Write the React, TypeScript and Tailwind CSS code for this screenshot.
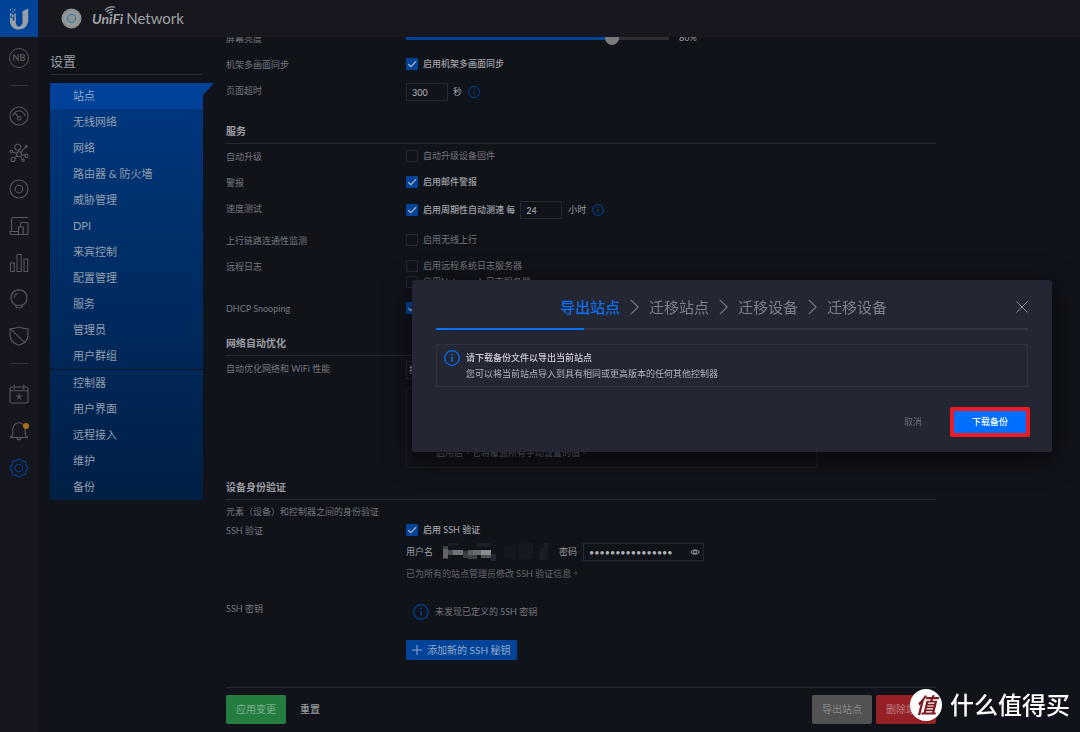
import type { ReactNode } from "react";
import { useId } from "react";
import clsx from "clsx";

interface MenuItem {
  label: string;
  active?: boolean;
}

const SITE_MENU: MenuItem[] = [
  { label: "站点", active: true },
  { label: "无线网络" },
  { label: "网络" },
  { label: "路由器 & 防火墙" },
  { label: "威胁管理" },
  { label: "DPI" },
  { label: "来宾控制" },
  { label: "配置管理" },
  { label: "服务" },
  { label: "管理员" },
  { label: "用户群组" },
];

const CONTROLLER_MENU: MenuItem[] = [
  { label: "控制器" },
  { label: "用户界面" },
  { label: "远程接入" },
  { label: "维护" },
  { label: "备份" },
];

const STEPS = ["导出站点", "迁移站点", "迁移设备", "迁移设备"];

/* Redacted user name: x, y, width, height and grey of each block. */
const MOSAIC: [number, number, number, number, string][] = [
  [4, 3, 5, 13, "#3c3e45"],
  [4, 6, 5, 9, "#62646a"],
  [9, 7, 5, 5, "#4a4c53"],
  [14, 7, 10, 5, "#707277"],
  [24, 8, 5, 7, "#3a3c44"],
  [29, 7, 5, 5, "#5a5c62"],
  [29, 12, 9, 4, "#3e4048"],
  [34, 7, 8, 5, "#686a70"],
  [42, 7, 10, 5, "#8a8b8f"],
  [42, 12, 10, 3, "#4e5057"],
  [52, 11, 5, 7, "#23262e"],
  [9, 0, 10, 3, "#191c24"],
  [38, 0, 14, 4, "#1b1e26"],
  [66, 2, 10, 14, "#151820"],
  [80, 0, 14, 16, "#161922"],
  [105, 0, 4, 5, "#1c1f27"],
  [100, 5, 9, 12, "#191c24"],
];

/* ---------------- Icons ---------------- */

function Icon({ children, className = "size-5" }: { children: ReactNode; className?: string }) {
  return (
    <svg
      viewBox="0 0 20 20"
      className={clsx("shrink-0", className)}
      fill="none"
      stroke="currentColor"
      strokeWidth="1.100"
      strokeLinecap="round"
      strokeLinejoin="round"
      aria-hidden="true"
    >
      {children}
    </svg>
  );
}

function InfoIcon({ className }: { className: string }) {
  return (
    <svg viewBox="0 0 16 16" className={clsx("shrink-0", className)} fill="none" stroke="currentColor" aria-hidden="true">
      <circle cx="8" cy="8" r="7.300" strokeWidth="1.300" />
      <path d="M8 6.800v5" strokeWidth="1.500" />
      <circle cx="8" cy="4.600" r=".9" fill="currentColor" stroke="none" />
    </svg>
  );
}

function UbiquitiLogo() {
  return (
    <svg viewBox="0 0 20 22" className="h-[22px] w-5" fill="#9a9ea6" aria-hidden="true">
      <path d="M13.500 3.200 19.200.6v11.600c0 5.200-3.800 9.300-9.300 9.300-5.100 0-8.800-3.300-8.900-8.300V9.500h1.500v1h1.400v2h1.500v-3h1.400v4.600c0 2.900 1.200 4.300 3 4.700 2.200-.7 3.700-2.100 3.700-5z" />
      <path d="M6.800 3.600v7.200H5.300V5.600h1.500zM1 1.200h1.200v1.200H1zM3.200 3.200h1.400v1.400H3.200zM1 5h1.400v3.600H1zM3 6.400h1.500v2.800H3zM5 1.200h1.400v1.200H5zM2.600.2h.8v.8h-.8z" />
    </svg>
  );
}

const railMain = [
  {
    label: "仪表板",
    icon: (
      <>
        <circle cx="10" cy="10" r="9" />
        <path d="M4.200 9.500a6 6 0 0 1 11.600 0M6.200 7.200l3 3.600" />
        <circle cx="10.300" cy="12.300" r="1.800" />
      </>
    ),
  },
  {
    label: "拓扑",
    icon: (
      <>
        <circle cx="8.800" cy="4.200" r="3" />
        <circle cx="10" cy="11.300" r="2.500" />
        <circle cx="4" cy="16.500" r="2" />
        <circle cx="17.300" cy="12.800" r="1.700" />
        <circle cx="2.300" cy="8.500" r="1.300" />
        <circle cx="17.300" cy="3.300" r="1" />
        <circle cx="14" cy="17.300" r="1.200" />
        <path d="m9.200 7.200.4 1.600M12.400 11.800l3.200.6M8 12.900l-2.500 2.200M3.600 8.900l4 1.600M11.600 9.300l5-5.200M11.500 13.300l1.800 3" />
      </>
    ),
  },
  {
    label: "设备",
    icon: (
      <>
        <circle cx="10" cy="10" r="9" />
        <circle cx="10" cy="10" r="3.800" />
      </>
    ),
  },
  {
    label: "客户端",
    icon: (
      <path d="M19 1.500H4.500a2 2 0 0 0-2 2v12M8.500 15.500H1v1.300A1.700 1.700 0 0 0 2.700 18.500h6.800M9.500 11h4.800v7.500H9.500zM11.500 11V7.500a1 1 0 0 1 1-1H18a1 1 0 0 1 1 1v10a1 1 0 0 1-1 1h-3.700" />
    ),
  },
  {
    label: "统计",
    icon: <path d="M1.500 10h3.700v8.500H1.500zM8 1.500h4.200v17H8zM15 6h3.700v12.500H15z" />,
  },
  {
    label: "洞察",
    icon: (
      <path d="M6.800 16.200a8 8 0 1 1 6.400 0M5.200 8.500a5 5 0 0 1 3.300-4M6.800 16.200h6.400v1.300l-1.400 1.300H8.200l-1.400-1.300z" />
    ),
  },
  {
    label: "安全",
    icon: <path d="M10 1c2.800 1.300 6 1.700 9 1.700v6.500c0 4.800-4 8.300-9 10-5-1.700-9-5.200-9-10V2.700C4 2.700 7.200 2.300 10 1zM2.200 3.600l13.600 13" />,
  },
];

/* ---------------- Form parts ---------------- */

interface CheckboxProps {
  label: string;
  checked?: boolean;
  className?: string;
}

function Checkbox({ label, checked = false, className }: CheckboxProps) {
  return (
    <label
      className={clsx(
        "relative flex h-6 items-center gap-[5px] whitespace-nowrap",
        checked ? "font-medium text-[#a0a2a6]" : "text-[#73767d]",
        className,
      )}
    >
      <input
        type="checkbox"
        defaultChecked={checked}
        className="peer size-3 shrink-0 appearance-none rounded-[1px] border border-[#262931] checked:border-[#004399] checked:bg-[#004399]"
      />
      <svg viewBox="0 0 12 12" className="pointer-events-none absolute left-0 hidden size-3 peer-checked:block" fill="none" stroke="#b4bcc8" strokeWidth="1.200" aria-hidden="true">
        <path d="M2.300 6.200 4.800 8.600l5.400-5.400" />
      </svg>
      {label}
    </label>
  );
}

function NumberBox({ label, value }: { label: string; value: string }) {
  return (
    <input
      type="text"
      inputMode="numeric"
      aria-label={label}
      defaultValue={value}
      className="h-[18px] w-[42px] border border-[#262931] bg-transparent px-[5px] font-medium text-[#a6a8ac] outline-none"
    />
  );
}

function Row({ label, children, className = "pb-0.5" }: { label: string; children: ReactNode; className?: string }) {
  return (
    <div className={clsx("grid grid-cols-[180px_1fr]", className)}>
      <div className="pt-0.5 leading-[22px] text-[#73767d]">{label}</div>
      <div>{children}</div>
    </div>
  );
}

function SectionTitle({ children, className = "mt-2.5" }: { children: ReactNode; className?: string }) {
  return (
    <h2 className={clsx("h-6 border-b border-[#262830] text-[10px] leading-[22px] font-bold text-[#9b9da2]", className)}>
      {children}
    </h2>
  );
}

function SideLinks({ items }: { items: MenuItem[] }) {
  return (
    <ul>
      {items.map((item) => (
        <li key={item.label}>
          <a
            href="#"
            className={clsx(
              "relative block h-[26px] pl-[23px] text-[11px] leading-[26px]",
              item.active ? "bg-[#00429a] text-[#93a8c6]" : "text-[#949fae]",
            )}
          >
            {item.label}
            {item.active && (
              <svg viewBox="0 0 11 12" className="absolute top-0 left-full h-3 w-[11px]" fill="#00429a" aria-hidden="true">
                <path d="M0 0h11L0 12z" />
              </svg>
            )}
          </a>
        </li>
      ))}
    </ul>
  );
}

/* ---------------- Page regions ---------------- */

function TopBar() {
  return (
    <header className="flex h-[37px] shrink-0 items-center bg-[#17171f]">
      <a href="#" aria-label="Ubiquiti" className="flex h-full w-[38px] items-center justify-center bg-[#004399]">
        <UbiquitiLogo />
      </a>
      <svg viewBox="0 0 22 22" className="ml-[23px] size-[21px]" aria-hidden="true">
        <circle cx="11" cy="11" r="10.500" fill="#8f9091" />
        <circle cx="11" cy="11" r="8" fill="#959697" />
        <circle cx="11" cy="11" r="4.300" fill="#8f9192" stroke="#3f7fa3" strokeWidth="1.300" />
      </svg>
      <div className="relative ml-2.5 flex items-baseline gap-[3px] pb-px text-[#a0a1a5]">
        <span className="text-[14px] font-bold italic">UniFi</span>
        <svg viewBox="0 0 12 8" className="absolute -top-px left-3 h-2 w-3" fill="none" stroke="currentColor" strokeWidth="1.200" aria-hidden="true">
          <path d="M1 4.500C3 1.600 6.500.4 10.800 1.200M2.600 6.200c1.600-2.200 4-3.100 7-2.600M4.400 7.600c1-1.200 2.300-1.700 4-1.500" />
        </svg>
        <span className="text-[15px]">Network</span>
      </div>
    </header>
  );
}

function IconRail() {
  return (
    <nav aria-label="主导航" className="flex w-[38px] shrink-0 flex-col items-center bg-[#16161f] pt-[11px] text-[#56575f]">
      <button type="button" className="flex size-5 items-center justify-center rounded-full border border-[#56575f] text-[9px] font-bold">
        NB
      </button>
      <hr className="mt-[17px] w-[18px] border-[#303139]" />
      <div className="mt-5 flex h-60 flex-col justify-between">
        {railMain.map((entry) => (
          <a key={entry.label} href="#" aria-label={entry.label}>
            <Icon>{entry.icon}</Icon>
          </a>
        ))}
      </div>
      <hr className="mt-[17px] w-[18px] border-[#303139]" />
      <div className="mt-5 flex flex-col gap-[17px]">
        <a href="#" aria-label="事件">
          <Icon>
            <path d="M4 3H2.500A1.500 1.500 0 0 0 1 4.500v13A1.500 1.500 0 0 0 2.500 19h15a1.500 1.500 0 0 0 1.500-1.500v-13A1.500 1.500 0 0 0 17.500 3H16M6.500 3h7M5.200 1v4M14.800 1v4M1 6.800h18" />
            <path d="M10 9.500v3m0 0-2.700-.8M10 12.500l2.700-.8M10 12.500l-1.700 2.600M10 12.500l1.700 2.600" />
          </Icon>
        </a>
        <a href="#" aria-label="警报" className="relative">
          <Icon>
            <path d="M1.500 16.500c1.800-1 2.300-2.500 2.300-5V8a6.200 6.200 0 0 1 12.400 0v3.500c0 2.500.5 4 2.300 5zM8 16.800a2 2 0 0 0 4 0" />
          </Icon>
          <span className="absolute top-0.5 right-0 size-1.5 rounded-full bg-[#a56f16]" />
        </a>
        <a href="#" aria-label="设置" className="text-[#00419a]">
          <Icon>
            <circle cx="10" cy="10" r="3.700" />
            <path d="M10 1c1.500 0 1.900 1.600 2.900 2s2.400-.5 3.400.6.200 2.400.6 3.400 2.100 1.400 2.100 3-1.700 2-2.100 3 .5 2.400-.6 3.400-2.400.2-3.400.6-1.400 2-2.900 2-1.900-1.600-2.900-2-2.400.5-3.400-.6-.2-2.400-.6-3.400S1 11.600 1 10s1.700-2 2.100-3-.5-2.400.6-3.400 2.400-.2 3.400-.6S8.500 1 10 1z" />
          </Icon>
        </a>
      </div>
    </nav>
  );
}

function SettingsMenu() {
  return (
    <aside className="ml-3 w-[153px] shrink-0">
      <h1 className="mb-2 h-[38px] border-b border-[#2a2c34] pt-3 text-[13px] leading-6 text-[#9a9ca1]">设置</h1>
      <nav aria-label="设置" className="bg-linear-to-b from-[#003881] to-[#001f44]">
        <SideLinks items={SITE_MENU} />
        <div className="border-t border-[#0a1424]">
          <SideLinks items={CONTROLLER_MENU} />
        </div>
      </nav>
    </aside>
  );
}

function SettingsForm() {
  const brightnessId = useId();
  const userId = useId();
  const passwordId = useId();

  return (
    <div className="-mt-[11px]">
      <Row label="屏幕亮度">
        <div className="flex h-6 items-center text-[#9a9ca1]">
          <label htmlFor={brightnessId} className="sr-only">
            屏幕亮度
          </label>
          <input
            id={brightnessId}
            type="range"
            defaultValue={80}
            className="h-[3px] w-[263px] appearance-none bg-linear-to-r from-[#004399] from-80% to-[#2e3036] to-80% [&::-webkit-slider-thumb]:size-3.5 [&::-webkit-slider-thumb]:appearance-none [&::-webkit-slider-thumb]:rounded-full [&::-webkit-slider-thumb]:bg-[#7b7b7c]"
          />
          <span className="ml-2.5">80%</span>
        </div>
      </Row>
      <Row label="机架多画面同步">
        <Checkbox label="启用机架多画面同步" checked />
      </Row>
      <Row label="页面超时" className="pb-1">
        <div className="flex h-7 items-center text-[#9a9ca1]">
          <NumberBox label="页面超时" value="300" />
          <span className="ml-[5px]">秒</span>
          <InfoIcon className="ml-1.5 size-3 text-[#00419a]" />
        </div>
      </Row>

      <SectionTitle>服务</SectionTitle>
      <Row label="自动升级">
        <Checkbox label="自动升级设备固件" />
      </Row>
      <Row label="警报">
        <Checkbox label="启用邮件警报" checked />
      </Row>
      <Row label="速度测试" className="pb-1">
        <div className="flex h-7 items-center text-[#9a9ca1]">
          <Checkbox label="启用周期性自动测速 每" checked />
          <span className="ml-[5px] flex">
            <NumberBox label="测速间隔" value="24" />
          </span>
          <span className="ml-1.5">小时</span>
          <InfoIcon className="ml-1.5 size-3 text-[#00419a]" />
        </div>
      </Row>
      <Row label="上行链路连通性监测">
        <Checkbox label="启用无线上行" />
      </Row>
      <Row label="远程日志">
        <Checkbox label="启用远程系统日志服务器" />
        <Checkbox label="启用Netconsole日志服务器" className="-mt-2" />
      </Row>
      <Row label="DHCP Snooping">
        <Checkbox label="启用 DHCP Snooping" checked />
      </Row>

      <SectionTitle>网络自动优化</SectionTitle>
      <Row label="自动优化网络和 WiFi 性能" className="pb-1">
        <div className="flex h-7 items-center">
          <select
            aria-label="自动优化网络和 WiFi 性能"
            className="h-[18px] w-[120px] appearance-none border border-[#262931] bg-transparent px-0.5 text-[#9a9ca1]"
          >
            <option>按计划优化</option>
          </select>
        </div>
      </Row>
      <div className="ml-[180px] flex h-20 max-w-[411px] items-end border border-[#1b1e26] px-[29px] pb-2">
        <p className="font-['Lato','Noto_Sans_CJK_TC',sans-serif] text-[#63666d]">启用后，它将覆盖所有手动设置的值。</p>
      </div>

      <SectionTitle className="mt-2">设备身份验证</SectionTitle>
      <p className="h-[18px] leading-6 text-[#73767d]">元素（设备）和控制器之间的身份验证</p>
      <Row label="SSH 验证" className="pb-2.5">
        <Checkbox label="启用 SSH 验证" checked />
        <div className="flex h-5 items-center text-[#9a9ca1]">
          <label htmlFor={userId}>用户名</label>
          <span className="relative ml-[5px] h-[18px] w-[112px]">
            <input id={userId} type="text" className="size-full bg-transparent outline-none" />
            <svg viewBox="0 0 112 18" className="pointer-events-none absolute inset-0 size-full" shapeRendering="crispEdges" aria-hidden="true">
              {MOSAIC.map(([x, y, w, h, fill]) => (
                <rect key={`${x}-${y}-${w}`} x={x + 1} y={y} width={w} height={h} fill={fill} />
              ))}
            </svg>
          </span>
          <label htmlFor={passwordId} className="ml-[9px]">
            密码
          </label>
          <span className="relative ml-1.5 flex">
            <input
              id={passwordId}
              type="password"
              defaultValue="abcdefghijklmnop"
              className="h-[18px] w-[121px] border border-[#262931] bg-transparent pr-5 pl-[5px] text-[#b0b2b6] outline-none"
            />
            <button type="button" aria-label="显示密码" className="absolute inset-y-0 right-1 flex items-center text-[#808288]">
              <svg viewBox="0 0 10 8" className="h-2 w-2.5" fill="none" stroke="currentColor" strokeWidth="1.100" aria-hidden="true">
                <path d="M.8 4C2.500 1 7.500 1 9.200 4 7.500 7 2.500 7 .8 4zM3.500 4a1.500 1.500 0 0 1 3 0 1.500 1.500 0 0 1-3 0z" />
              </svg>
            </button>
          </span>
        </div>
        <p className="font-['Lato','Noto_Sans_CJK_TC',sans-serif] leading-6 text-[#63666d]">已为所有的站点管理员修改 SSH 验证信息。</p>
      </Row>
      <Row label="SSH 密钥" className="pb-5">
        <div className="flex h-8 items-center pl-[7px] text-[#74777d]">
          <InfoIcon className="size-4 text-[#00419a]" />
          <span className="ml-1.5">未发现已定义的 SSH 密钥</span>
        </div>
        <button type="button" className="mt-3 flex h-5 items-center gap-[5px] rounded-[1px] bg-[#004399] px-1.5 text-[10px] text-[#95aac8]">
          <svg viewBox="0 0 10 10" className="size-2.5" stroke="currentColor" aria-hidden="true">
            <path d="M5 0v10M0 5h10" />
          </svg>
          添加新的 SSH 秘钥
        </button>
      </Row>
    </div>
  );
}

function ActionBar() {
  const base = "h-[29px] w-[60px] rounded-[2px] whitespace-nowrap";
  return (
    <footer className="flex h-[45px] shrink-0 items-start gap-1 border-t border-[#262830] pt-[7px] text-[10px]">
      <button type="button" className={clsx(base, "bg-[#237d3f] text-[#7fae8b]")}>
        应用变更
      </button>
      <button type="button" className="ml-2.5 h-[29px] font-medium text-[#96989c]">
        重置
      </button>
      <span className="flex-1" />
      <button type="button" className={clsx(base, "bg-[#525252] text-[#8a8a8a]")}>
        导出站点
      </button>
      <button type="button" className={clsx(base, "bg-[#952127] text-[#bd7d80]")}>
        删除站点
      </button>
    </footer>
  );
}

function ExportDialog() {
  return (
    <div className="fixed inset-0 flex items-center justify-end pr-7">
      <section
        role="dialog"
        aria-label="导出站点"
        className="w-[640px] max-w-full rounded-[3px] bg-[#242633] px-6 pt-1.5 pb-[15px] shadow-[0_6px_28px_rgba(0,0,0,0.6)]"
      >
        <div className="flex h-[42px] items-center">
          <ol className="flex flex-1 items-center justify-center gap-2.5 text-[15px] whitespace-nowrap text-[#7c7f8c]">
            {STEPS.map((step, i) => (
              <li key={i} className={clsx("flex items-center gap-2.5", i === 0 && "font-medium text-[#0b6ff5]")}>
                {i > 0 && (
                  <svg viewBox="0 0 9 16" className="h-4 w-[9px]" fill="none" stroke="currentColor" strokeWidth="1.100" aria-hidden="true">
                    <path d="M.8.8 8.200 8 .8 15.200" />
                  </svg>
                )}
                {step}
              </li>
            ))}
          </ol>
          <button type="button" aria-label="关闭" className="ml-[5px] text-[#8a8c98]">
            <svg viewBox="0 0 12 12" className="size-3" stroke="currentColor" aria-hidden="true">
              <path d="m.5.5 11 11M11.500.5l-11 11" />
            </svg>
          </button>
        </div>
        <div className="h-0.5 bg-[#333542]">
          <div className="h-full w-1/4 bg-[#0070ff]" />
        </div>

        <div className="mt-3.5 flex border border-[#2e303d] px-[7px] pt-[5px] pb-1">
          <InfoIcon className="size-4 text-[#006ff2]" />
          <div className="ml-1.5 leading-4">
            <p className="font-medium text-[#cfd0d6]">请下载备份文件以导出当前站点</p>
            <p className="text-[#b2b4be]">您可以将当前站点导入到具有相同或更高版本的任何其他控制器</p>
          </div>
        </div>

        <div className="mt-5 -mr-0.5 flex items-center justify-end gap-7">
          <button type="button" className="text-[#6a6d7a]">
            取消
          </button>
          <button type="button" className="h-[30px] w-20 rounded-[2px] border-4 border-[#ed1b24] bg-[#006fff] font-medium text-white">
            下载备份
          </button>
        </div>
      </section>
    </div>
  );
}

function Watermark() {
  return (
    <div className="pointer-events-none fixed right-2.5 bottom-[11px] flex items-center gap-2">
      <span className="flex size-8 items-center justify-center rounded-full bg-white text-[21px] font-bold text-[#7d1a1f] italic">
        值
      </span>
      <span className="text-[24px] leading-8 font-medium text-white">什么值得买</span>
    </div>
  );
}

export default function App() {
  return (
    <div className="flex h-screen flex-col overflow-hidden bg-[#11131b] font-['Lato','Noto_Sans_CJK_SC',sans-serif] text-[9px]">
      <TopBar />
      <div className="flex min-h-0 flex-1">
        <IconRail />
        <SettingsMenu />
        <main className="ml-[23px] flex max-w-[710px] min-w-0 flex-1 flex-col">
          <div className="min-h-0 flex-1 overflow-hidden">
            <SettingsForm />
          </div>
          <ActionBar />
        </main>
      </div>
      <ExportDialog />
      <Watermark />
    </div>
  );
}
